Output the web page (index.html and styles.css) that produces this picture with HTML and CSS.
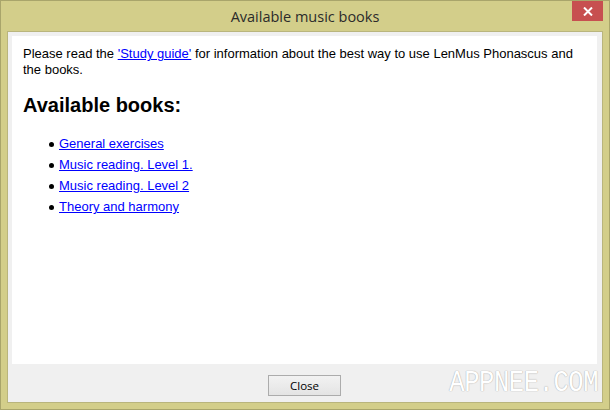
FILE: index.html
```html
<!DOCTYPE html>
<html lang="en">
<head>
    <meta charset="UTF-8">
    <title>Available music books</title>
    <link rel="stylesheet" href="styles.css">
</head>
<body>
    <div class="window">
        <div class="titlebar">
            <span></span>
            <div class="title">Available music books</div>
            <div class="close-btn">
                <svg width="10" height="9" viewBox="0 0 10 9">
                    <path d="M1 0.5 L9 8.5 M9 0.5 L1 8.5" stroke="#fff" stroke-width="2"/>
                </svg>
            </div>
        </div>

        <div class="client">
            <div class="content">
                <p class="intro">Please read the <a href="#">'Study guide'</a> for information about the best way to use LenMus Phonascus and the books.</p>
                <h2>Available books:</h2>
                <ul class="books">
                    <li><a href="#">General exercises</a></li>
                    <li><a href="#">Music reading. Level 1.</a></li>
                    <li><a href="#">Music reading. Level 2</a></li>
                    <li><a href="#">Theory and harmony</a></li>
                </ul>
            </div>
            <div class="footer">
                <span></span>
                <button class="btn">Close</button>
                <div class="watermark">APPNEE.COM</div>
            </div>
        </div>
    </div>
</body>
</html>
```

FILE: styles.css
```css
* {
    margin: 0;
    padding: 0;
    box-sizing: border-box;
}

body {
    width: 610px;
    height: 410px;
    overflow: hidden;
    font-family: "Liberation Sans", Arial, sans-serif;
}

.window {
    width: 610px;
    height: 410px;
    background: #d3ce8a;
    border: 1px solid #a9a56b;
    padding: 0 6px;
}

.titlebar {
    height: 30px;
    display: grid;
    grid-template-columns: 1fr auto 1fr;
}

.title {
    font-family: "Open Sans", sans-serif;
    font-size: 14.5px;
    color: #2b2b2b;
    line-height: 31px;
}

.close-btn {
    justify-self: end;
    width: 31px;
    height: 20px;
    background: #c75050;
    display: flex;
    align-items: center;
    justify-content: center;
}

.client {
    height: 372px;
    background: #f0f0f0;
    border: 1px solid #b9b57d;
    padding: 4px 5px 0 4px;
    display: flex;
    flex-direction: column;
}

.content {
    height: 328px;
    background: #fff;
    padding: 10px 11px;
    font-size: 13px;
    color: #000;
}

.content a {
    color: #0000ff;
}

.intro {
    line-height: 16px;
}

.content h2 {
    font-size: 20px;
    line-height: 24px;
    margin-top: 15px;
    margin-bottom: 16px;
}

.books {
    list-style: none;
    padding-left: 36px;
}

.books li {
    line-height: 21px;
}

.books li::before {
    content: "";
    display: inline-block;
    width: 5px;
    height: 5px;
    border-radius: 50%;
    background: #000;
    vertical-align: middle;
    margin-left: -10px;
    margin-right: 5px;
}

.footer {
    flex: 1;
    display: grid;
    grid-template-columns: 1fr auto 1fr;
    align-items: start;
}

.btn {
    margin-top: 11px;
    width: 73px;
    height: 21px;
    border: 1px solid #acacac;
    background: linear-gradient(#f2f2f2, #e4e4e4);
    font-family: "Open Sans", sans-serif;
    font-size: 11.5px;
    color: #000;
}

.watermark {
    justify-self: end;
    margin-top: 5px;
    margin-right: -1px;
    font-family: "Liberation Mono", monospace;
    font-size: 29px;
    line-height: 29px;
    letter-spacing: -0.5px;
    color: #fff;
    text-shadow: 0 0 1px #b0b0b0, 0 0 1px #b0b0b0;
    transform: scaleX(0.88);
    transform-origin: right center;
}
```
